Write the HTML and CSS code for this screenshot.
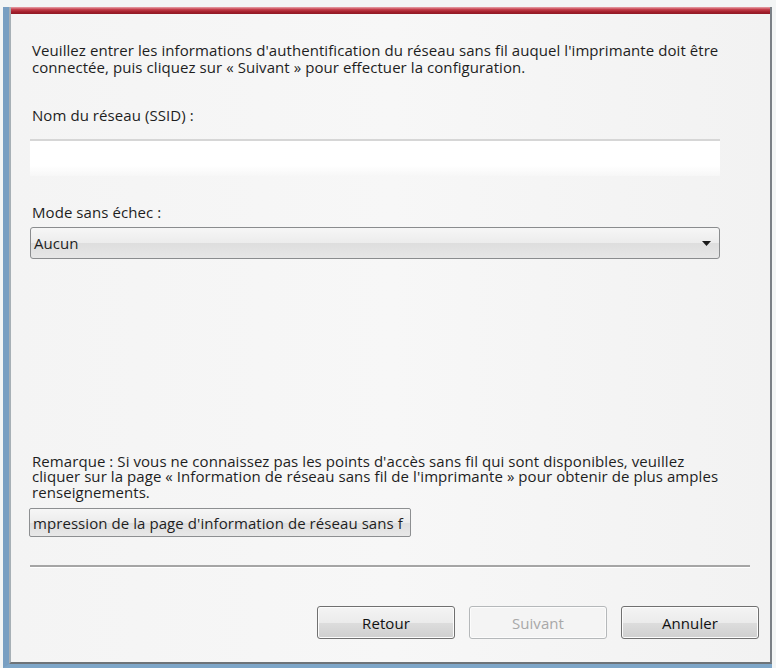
FILE: index.html
```html
<!DOCTYPE html>
<html lang="fr">
<head>
<meta charset="utf-8">
<title>Configuration sans fil</title>
<link rel="stylesheet" href="styles.css">
</head>
<body>
<div class="frame">
  <div class="titlebar"></div>
  <div class="dialog">
    <p class="intro">Veuillez entrer les informations d'authentification du réseau sans fil auquel l'imprimante doit être connectée, puis cliquez sur « Suivant » pour effectuer la configuration.</p>
    <label class="label label-ssid">Nom du réseau (SSID) :</label>
    <div class="input"></div>
    <label class="label label-mode">Mode sans échec :</label>
    <div class="select">
      <span class="select-text">Aucun</span>
      <svg class="select-arrow" width="9" height="5" viewBox="0 0 9 5"><path d="M0 0H9L4.5 5Z" fill="#1a1a1a"/></svg>
    </div>
    <div class="spacer"></div>
    <p class="note">Remarque : Si vous ne connaissez pas les points d'accès sans fil qui sont disponibles, veuillez cliquer sur la page « Information de réseau sans fil de l'imprimante » pour obtenir de plus amples renseignements.</p>
    <div class="print-btn"><span>mpression de la page d'information de réseau sans f</span></div>
    <div class="separator"></div>
    <div class="actions">
      <div class="btn">Retour</div>
      <div class="btn btn-disabled">Suivant</div>
      <div class="btn">Annuler</div>
    </div>
  </div>
</div>
</body>
</html>
```
FILE: styles.css
```css
html, body {
  margin: 0;
  padding: 0;
}
body {
  width: 776px;
  height: 668px;
  background: #f3f5f5;
  font-family: "Open Sans", "Noto Sans", "DejaVu Sans", sans-serif;
  font-size: 15px;
  color: #1e1e1e;
  overflow: hidden;
  box-sizing: border-box;
  padding: 7px 4px 0 3px;
}
.frame {
  height: 661px;
  box-sizing: border-box;
  border-left: 6px solid #789fc2;
  border-bottom: 4px solid #7ea6c8;
  display: flex;
  flex-direction: column;
}
.titlebar {
  height: 7px;
  background: linear-gradient(#e8a4ab 0%, #c4404c 35%, #a31e2b 70%, #8f1a25 100%);
  border-left: 2px solid #a7b0b6;
  border-right: 2px solid #7b8086;
}
.dialog {
  flex: 1;
  background: linear-gradient(90deg, #f4f4f4, #f7f7f7 50%, #f2f2f2);
  border-left: 2px solid #a7b0b6;
  border-right: 2px solid #7b8086;
  border-bottom: 2px solid #6d7378;
  padding: 0 0 0 21px;
  display: flex;
  flex-direction: column;
  letter-spacing: 0.07px;
}
.intro {
  margin: 28px 0 0 0;
  width: 700px;
  line-height: 17px;
}
.label {
  display: block;
  line-height: 17px;
}
.label-ssid {
  margin-top: 31px;
}
.input {
  margin: 15px 0 0 -2px;
  width: 690px;
  height: 37px;
  box-sizing: border-box;
  background: linear-gradient(#ffffff, #ffffff 70%, #f7f7f7);
  border-top: 2px solid #d6d6d6;
}
.label-mode {
  margin-top: 28px;
}
.select {
  margin: 6px 0 0 -2px;
  width: 690px;
  height: 32px;
  box-sizing: border-box;
  border: 1px solid #8a8c8e;
  border-radius: 3px;
  background: linear-gradient(#f6f6f6, #ececec 50%, #dedede 51%, #e6e6e6);
  display: flex;
  align-items: center;
  padding: 0 8px 0 3px;
}
.select-text {
  flex: 1;
}
.spacer {
  flex: 1;
}
.note {
  margin: 0;
  width: 700px;
  line-height: 15.5px;
}
.print-btn {
  margin: 8px 0 0 -3px;
  width: 382px;
  height: 29px;
  box-sizing: border-box;
  border: 1px solid #8d8f91;
  border-radius: 2px;
  background: linear-gradient(#f6f6f6, #ececec 50%, #dedede 51%, #e8e8e8);
  display: flex;
  align-items: center;
  padding-left: 3px;
  overflow: hidden;
  white-space: nowrap;
}
.separator {
  margin: 28px 0 0 -2px;
  width: 720px;
  height: 2px;
  background: #a5a5a5;
  border-bottom: 1px solid #ffffff;
}
.actions {
  margin: 38px 0 23px 0;
  display: flex;
  justify-content: flex-end;
  gap: 14px;
  padding-right: 11px;
}
.btn {
  width: 138px;
  height: 33px;
  box-sizing: border-box;
  border: 1px solid #707070;
  border-radius: 3px;
  background: linear-gradient(#f4f4f4, #ebebeb 50%, #dddddd 51%, #cfcfcf);
  box-shadow: inset 0 0 0 1px #fcfcfc;
  display: flex;
  align-items: center;
  justify-content: center;
  color: #111;
}
.btn-disabled {
  border-color: #b5b8ba;
  background: #f4f4f4;
  color: #a8a8a8;
}
```
